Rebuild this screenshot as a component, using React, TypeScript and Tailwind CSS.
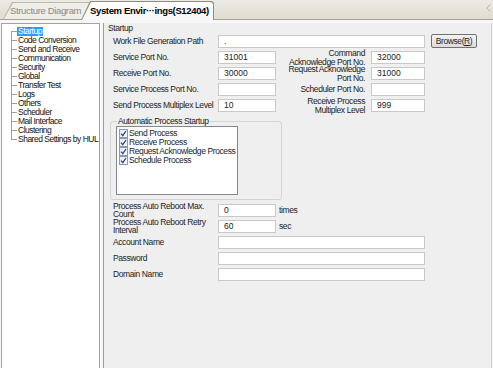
const treeItems = [
  "Startup",
  "Code Conversion",
  "Send and Receive",
  "Communication",
  "Security",
  "Global",
  "Transfer Test",
  "Logs",
  "Others",
  "Scheduler",
  "Mail Interface",
  "Clustering",
  "Shared Settings by HUL",
];

const processes = [
  "Send Process",
  "Receive Process",
  "Request Acknowledge Process",
  "Schedule Process",
];

const Field = ({ value = "", className = "" }: { value?: string; className?: string }) => (
  <div
    className={`shrink-0 h-[13px] bg-white border border-[#c8c8c8] px-[5px] text-[8.5px] leading-[11px] tracking-normal text-[#222] ${className}`}
  >
    {value}
  </div>
);

const Check = () => (
  <span className="shrink-0 w-[9px] h-[9px] border border-[#8e98a8] bg-gradient-to-br from-[#e3e8f0] to-white flex items-center justify-center">
    <svg width="7" height="7" viewBox="0 0 7 7">
      <path d="M1 3.6 L2.8 5.6 L6 1" fill="none" stroke="#2643a8" strokeWidth="1.3" />
    </svg>
  </span>
);

const TabBar = () => (
  <div className="relative h-[20px] shrink-0 bg-gradient-to-b from-[#eceae2] to-[#e0ddd2] border-b border-[#a6a398] flex items-end pl-[3px]">
    <div className="relative shrink-0 h-[17px] w-[86px] bg-[#bcb9ad] [clip-path:polygon(9px_0,100%_0,100%_100%,0_100%)]">
      <div className="absolute left-[1px] right-0 top-[1px] bottom-0 bg-[#eeede7] [clip-path:polygon(9px_0,100%_0,100%_100%,0_100%)] pl-[6px] text-[9.5px] tracking-[-0.35px] leading-[15px] text-[#8a8a8a] whitespace-nowrap">
        Structure Diagram
      </div>
    </div>
    <div className="relative z-10 shrink-0 -ml-[8px] -mb-[1px] h-[19px] w-[133px] bg-[#8e8c83] [clip-path:polygon(9px_0,calc(100%-2px)_0,100%_2px,100%_100%,0_100%)]">
      <div className="absolute left-[1px] right-[1px] top-[1px] bottom-0 bg-gradient-to-b from-white to-[#f7f7f7] [clip-path:polygon(9px_0,calc(100%-2px)_0,100%_2px,100%_100%,0_100%)] pl-[8px] text-[9.5px] tracking-[-0.35px] leading-[17px] font-bold text-black whitespace-nowrap">
        System Envir···ings(S12404)
      </div>
    </div>
    <svg className="absolute right-[2px] top-[4px]" width="5" height="8" viewBox="0 0 5 8">
      <path d="M4.5 0.5 L0.8 4 L4.5 7.5" fill="none" stroke="#b9b6ab" strokeWidth="1" />
    </svg>
  </div>
);

const Tree = () => (
  <div className="relative shrink-0 ml-[1px] w-[99px] bg-white border-l border-r border-t border-[#a3a3a3] pt-[3px] text-[8.5px] tracking-[-0.5px] text-[#111]">
    <div className="absolute left-[9px] top-[8px] h-[108px] border-l border-[#a0a0a0]" />
    {treeItems.map((item, i) => (
      <div key={item} className="flex items-center h-[9px] whitespace-nowrap">
        <span className="shrink-0 ml-[9px] w-[6px] border-t border-[#a0a0a0]" />
        <span className={`px-[1px] leading-[9px] ${i === 0 ? "bg-[#3399ff] text-white" : ""}`}>{item}</span>
      </div>
    ))}
  </div>
);

const Row = ({ children }: { children: React.ReactNode }) => (
  <div className="flex items-center h-[12px]">{children}</div>
);

const Main = () => (
  <div className="flex-1 bg-[#efefef] border-l border-[#a0a0a0] text-[8.5px] tracking-[-0.4px] text-[#1c1c1c] whitespace-nowrap">
    <div className="pl-[4px] h-[10px] leading-[10px]">Startup</div>

    <div className="pl-[9px] mt-[1px]">
      <div className="flex items-center h-[14px]">
        <span className="w-[105px] shrink-0">Work File Generation Path</span>
        <Field value="." className="w-[207px]" />
        <div className="shrink-0 ml-[6px] w-[46px] h-[14px] border border-[#707070] rounded-[2px] bg-gradient-to-b from-[#f3f3f3] to-[#dcdcdc] text-center leading-[12px]">
          Browse(<span className="underline">R</span>)
        </div>
      </div>

      <div className="grid grid-cols-[105px_58px_95px_54px] auto-rows-[13px] gap-y-[3px] mt-[3px] items-center">
        <span>Service Port No.</span>
        <Field value="31001" />
        <span className="text-right pr-[6px] leading-[8.5px]">Command<br />Acknowledge Port No.</span>
        <Field value="32000" />

        <span>Receive Port No.</span>
        <Field value="30000" />
        <span className="text-right pr-[6px] leading-[8.5px]">Request Acknowledge<br />Port No.</span>
        <Field value="31000" />

        <span>Service Process Port No.</span>
        <Field />
        <span className="text-right pr-[6px]">Scheduler Port No.</span>
        <Field />

        <span>Send Process Multiplex Level</span>
        <Field value="10" />
        <span className="text-right pr-[6px] leading-[8.5px]">Receive Process<br />Multiplex Level</span>
        <Field value="999" />
      </div>
    </div>

    <fieldset className="ml-[6px] mt-[4px] w-[172px] border border-[#d3d3d3] rounded-[3px] px-[5px] pb-[4px]">
      <legend className="ml-[1px] px-[1px] h-[10px] leading-[10px]">Automatic Process Startup</legend>
      <div className="w-[122px] h-[69px] bg-white border border-[#828790] pt-[2px]">
        {processes.map((p) => (
          <div key={p} className="flex items-center h-[9px] pl-[2px]">
            <Check />
            <span className="ml-[1px] leading-[9px]">{p}</span>
          </div>
        ))}
      </div>
    </fieldset>

    <div className="pl-[9px] mt-[4px] flex flex-col gap-[4px]">
      <Row>
        <span className="w-[105px] shrink-0 leading-[8.5px]">Process Auto Reboot Max.<br />Count</span>
        <Field value="0" className="w-[58px]" />
        <span className="ml-[3px]">times</span>
      </Row>
      <Row>
        <span className="w-[105px] shrink-0 leading-[8.5px]">Process Auto Reboot Retry<br />Interval</span>
        <Field value="60" className="w-[58px]" />
        <span className="ml-[3px]">sec</span>
      </Row>
      <Row>
        <span className="w-[105px] shrink-0">Account Name</span>
        <Field className="w-[207px]" />
      </Row>
      <Row>
        <span className="w-[105px] shrink-0">Password</span>
        <Field className="w-[207px]" />
      </Row>
      <Row>
        <span className="w-[105px] shrink-0">Domain Name</span>
        <Field className="w-[207px]" />
      </Row>
    </div>
  </div>
);

export default function App() {
  return (
    <div className="w-[493px] h-[368px] overflow-hidden flex flex-col bg-[#f7f7f7] font-['Liberation_Sans',Arial,sans-serif]">
      <TabBar />
      <div className="flex flex-1 pt-[3px]">
        <Tree />
        <div className="w-[3px] shrink-0" />
        <Main />
        <div className="w-[2px] shrink-0 border-l border-[#cfcfcf]" />
      </div>
    </div>
  );
}
